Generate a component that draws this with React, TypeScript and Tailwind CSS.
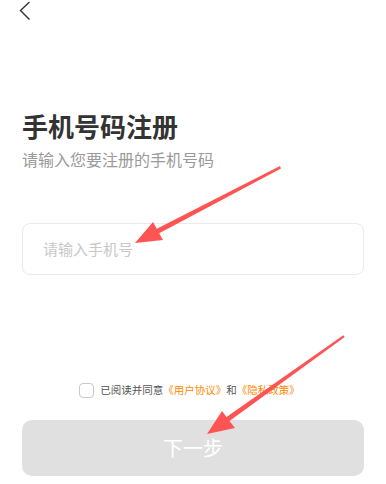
import { useState } from "react"

function BackIcon() {
  return (
    <svg width="12" height="20" viewBox="0 0 12 20" fill="none">
      <path d="M10.5 1 L1.5 9.6 L10.5 18.5" stroke="#333" strokeWidth="1.4" />
    </svg>
  )
}

function Arrows() {
  return (
    <svg
      className="pointer-events-none absolute left-0 top-0"
      width="386"
      height="484"
      viewBox="0 0 386 484"
    >
      <polygon
        points="135,243 153,222 156.8,228.8 280,166 281,168.5 159.2,233.2 163,240"
        fill="#fe5454"
      />
      <polygon
        points="207,434 222,411 226.5,417 343.3,335.2 344.7,337 229.5,421 235,428"
        fill="#fe5454"
      />
    </svg>
  )
}

export default function App() {
  const [checked, setChecked] = useState(false)

  return (
    <div
      className="relative h-[484px] w-[386px] overflow-hidden bg-white"
      style={{ fontFamily: '"Noto Sans CJK SC", "Noto Sans", sans-serif' }}
    >
      <div className="flex flex-col px-[22px]">
        <div className="ml-[-3px] mt-[1px] h-[20px]">
          <BackIcon />
        </div>

        <h1 className="mt-[88px] text-[26px] font-bold leading-[34px] text-[#333]">手机号码注册</h1>
        <p className="mt-[5px] text-[16px] leading-[22px] text-[#9a9a9a]">请输入您要注册的手机号码</p>

        <div className="mt-[53px] flex h-[52px] items-center rounded-[8px] border border-[#ebebeb] pl-[20px]">
          <input
            className="w-full bg-transparent text-[15px] text-[#333] outline-none placeholder:text-[#c8c8c8]"
            placeholder="请输入手机号"
          />
        </div>

        <div className="mt-[107px] flex items-center justify-center gap-[6px] pr-[7px]">
          <button
            onClick={() => setChecked(!checked)}
            className="h-[15px] w-[15px] rounded-[4px] border border-[#c8c8c8] bg-white"
          />
          <p className="flex text-[10.5px] leading-[16px] text-[#555]">
            <span>已阅读并同意</span>
            <span className="text-[#ff8a00]">《用户协议》</span>
            <span>和</span>
            <span className="text-[#ff8a00]">《隐私政策》</span>
          </p>
        </div>

        <button className="mt-[22px] flex h-[56px] items-center justify-center rounded-[10px] bg-[#e0e0e0] text-[20px] text-white">
          下一步
        </button>
      </div>
      <Arrows />
    </div>
  )
}
